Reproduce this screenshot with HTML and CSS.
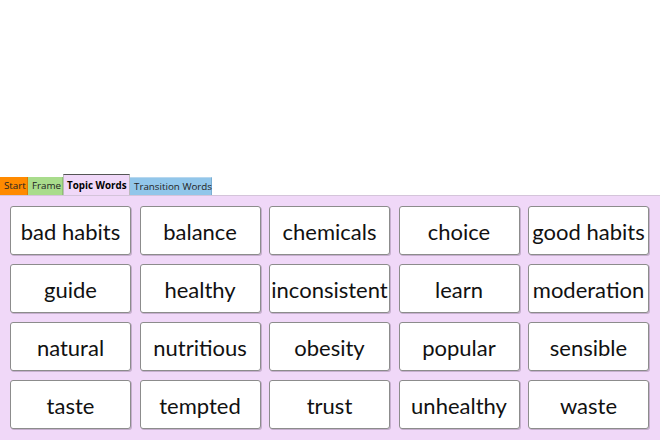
FILE: index.html
```html
<!DOCTYPE html>
<html>
<head>
<meta charset="utf-8">
<link rel="stylesheet" href="styles.css">
</head>
<body>
<div class="stage">
  <div class="tabs">
    <div class="tab tab-start">Start</div>
    <div class="tab tab-frame">Frame</div>
    <div class="tab tab-topic">Topic Words</div>
    <div class="tab tab-trans">Transition Words</div>
  </div>
  <div class="panel">
    <div class="card">bad habits</div>
    <div class="card">balance</div>
    <div class="card">chemicals</div>
    <div class="card">choice</div>
    <div class="card">good habits</div>
    <div class="card">guide</div>
    <div class="card">healthy</div>
    <div class="card">inconsistent</div>
    <div class="card">learn</div>
    <div class="card">moderation</div>
    <div class="card">natural</div>
    <div class="card">nutritious</div>
    <div class="card">obesity</div>
    <div class="card">popular</div>
    <div class="card">sensible</div>
    <div class="card">taste</div>
    <div class="card">tempted</div>
    <div class="card">trust</div>
    <div class="card">unhealthy</div>
    <div class="card">waste</div>
  </div>
</div>
</body>
</html>
```

FILE: styles.css
```css
html, body {
  margin: 0;
  padding: 0;
  background: #ffffff;
}
.stage {
  width: 660px;
  height: 440px;
  display: flex;
  flex-direction: column;
  overflow: hidden;
}
.tabs {
  margin-top: 175px;
  height: 20px;
  display: flex;
  align-items: flex-end;
  font-family: "Open Sans", "Liberation Sans", sans-serif;
  font-size: 9.8px;
}
.tab {
  height: 18px;
  line-height: 18px;
  padding: 0 4px;
  color: #222;
  box-sizing: border-box;
  white-space: nowrap;
}
.tab-start {
  width: 28px;
  background: #ff8a00;
  border-right: 1px solid #e07800;
}
.tab-frame {
  width: 35px;
  background: #a9dc8c;
  border-right: 1px solid #8fc272;
}
.tab-topic {
  width: 67px;
  height: 21px;
  line-height: 22px;
  background: #f0d8f8;
  border-top: 1px solid #555;
  border-left: 1px solid #bbb;
  border-right: 1px solid #bbb;
  font-weight: bold;
  color: #000;
  padding: 0 3px;
}
.tab-trans {
  width: 82px;
  background: #92c6ea;
  border-right: 1px solid #7aaed2;
  border-top: 1px solid #b8d8ef;
}
.panel {
  flex: 1;
  background: #f0d8f8;
  border-top: 1px solid #d4c4da;
  padding: 10px 11px 0 10px;
  display: grid;
  grid-template-columns: repeat(5, 121px);
  grid-auto-rows: 49px;
  column-gap: 8.5px;
  row-gap: 9px;
  align-content: start;
}
.card {
  background: #ffffff;
  border: 1px solid #8c8c8c;
  border-radius: 3px;
  box-shadow: 1px 1px 0 rgba(120, 100, 130, 0.35);
  box-sizing: border-box;
  display: flex;
  align-items: center;
  justify-content: center;
  font-family: "Lato", "DejaVu Sans", sans-serif;
  font-size: 22px;
  color: #111;
  white-space: nowrap;
  padding-top: 2px;
}
```
